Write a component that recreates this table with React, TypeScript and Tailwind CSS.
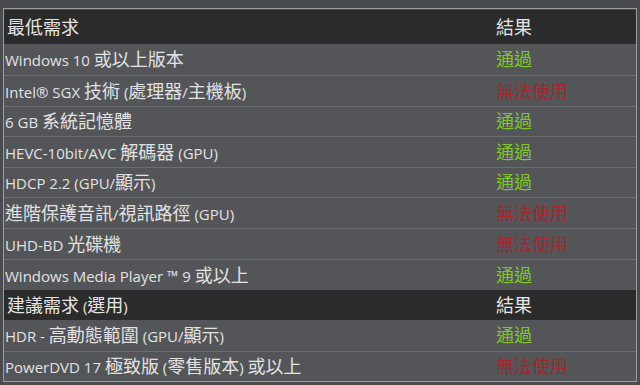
const FONT = '"Open Sans", "Noto Sans CJK TC", sans-serif'

interface Row {
  label: string
  result?: 'ok' | 'fail'
  header?: boolean
  h: string
}

const ROWS: Row[] = [
  { label: '最低需求', header: true, h: 'h-[34px]' },
  { label: 'Windows 10 或以上版本', result: 'ok', h: 'h-[31px]' },
  { label: 'Intel® SGX 技術 (處理器/主機板)', result: 'fail', h: 'h-[31px]' },
  { label: '6 GB 系統記憶體', result: 'ok', h: 'h-[30px]' },
  { label: 'HEVC-10bit/AVC 解碼器 (GPU)', result: 'ok', h: 'h-[31px]' },
  { label: 'HDCP 2.2 (GPU/顯示)', result: 'ok', h: 'h-[30px]' },
  { label: '進階保護音訊/視訊路徑 (GPU)', result: 'fail', h: 'h-[31px]' },
  { label: 'UHD-BD 光碟機', result: 'fail', h: 'h-[31px]' },
  { label: 'Windows Media Player ™ 9 或以上', result: 'ok', h: 'h-[31px]' },
  { label: '建議需求 (選用)', header: true, h: 'h-[30px]' },
  { label: 'HDR - 高動態範圍 (GPU/顯示)', result: 'ok', h: 'h-[31px]' },
  { label: 'PowerDVD 17 極致版 (零售版本) 或以上', result: 'fail', h: 'h-[30px]' },
]

// CJK glyphs render larger than the latin text in the original (font fallback)
function Mixed({ text }: { text: string }) {
  const parts = text.split(/([\u3400-\u9fff]+)/)
  return (
    <>
      {parts.map((p, i) =>
        /[\u3400-\u9fff]/.test(p) ? (
          <span key={i} className="text-[18px]">
            {p}
          </span>
        ) : (
          <span key={i} className="whitespace-pre">
            {p}
          </span>
        )
      )}
    </>
  )
}

export default function App() {
  return (
    <div
      className="h-[385px] w-[640px] overflow-hidden bg-[#4a4b4f] px-[3px] pt-[8px]"
      style={{ fontFamily: FONT }}
    >
      <div className="border border-[#9c9da0] bg-[#4a4b4f] pt-px">
        {ROWS.map((row, i) =>
          row.header ? (
            <div
              key={i}
              className={`flex items-center bg-[#2b2b2c] text-[15px] text-[#e4e4e4] ${row.h}`}
            >
              <div className="w-[492px] pl-[3px]">
                <Mixed text={row.label} />
              </div>
              <div className="flex-1">
                <span className="text-[18px]">結果</span>
              </div>
            </div>
          ) : (
            <div
              key={i}
              className={`flex items-center border-t border-[#6c6d71] bg-[#545559] text-[15px] text-[#e2e2e2] ${row.h} ${
                ROWS[i - 1]?.header ? 'border-t-0' : ''
              }`}
            >
              <div className="w-[492px] pl-px">
                <Mixed text={row.label} />
              </div>
              <div className="flex-1">
                {row.result === 'ok' ? (
                  <span className="text-[18px] text-[#7fc62c]">通過</span>
                ) : (
                  <span className="text-[18px] text-[#a3282c]">無法使用</span>
                )}
              </div>
            </div>
          )
        )}
      </div>
    </div>
  )
}
